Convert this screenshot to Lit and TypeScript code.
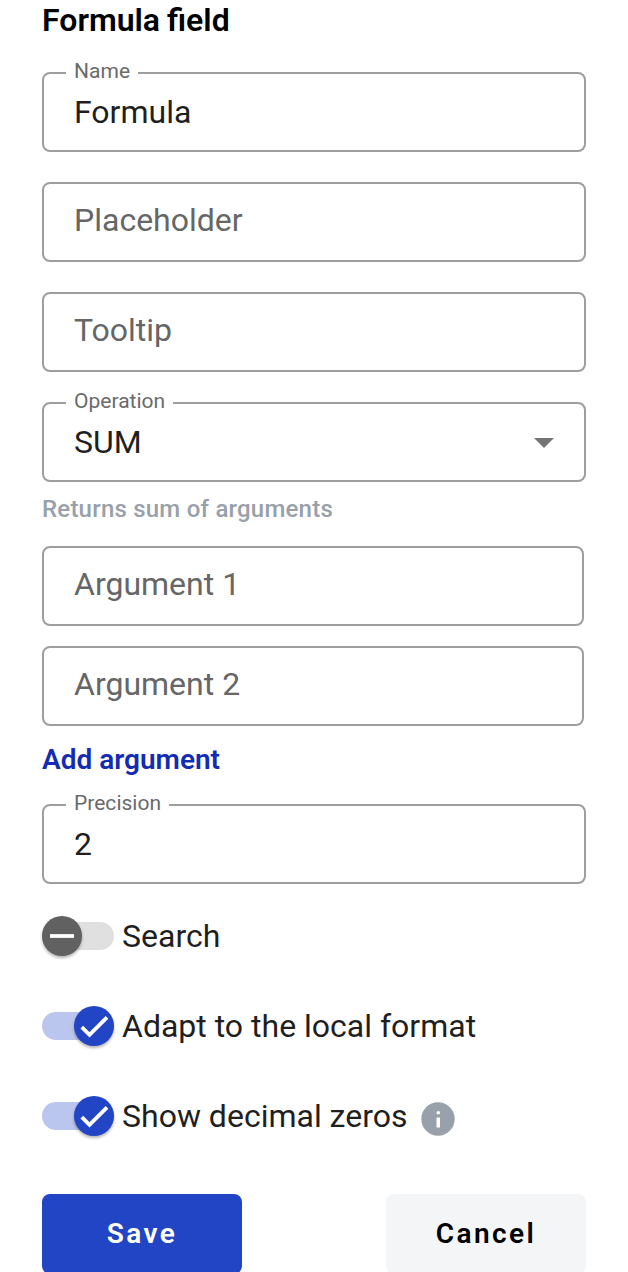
import { LitElement, html, css, nothing } from "lit";
import { customElement, property } from "lit/decorators.js";

@customElement("outlined-field")
class OutlinedField extends LitElement {
  @property() label = "";
  @property() value = "";
  @property() placeholder = "";
  @property({ type: Boolean }) select = false;
  static styles = css`
    :host { display: block; }
    fieldset { box-sizing: border-box; height: 89px; margin: -9px 0 0; padding: 0 30px; border: 2px solid #9e9e9e; border-radius: 8px; min-width: 0; }
    fieldset.plain { height: 80px; margin: 0; }
    legend { margin-left: -8px; padding: 0 8px; height: 20px; line-height: 16px; font-size: 21px; letter-spacing: 0.02px; color: #6a6a6a; }
    .row { display: flex; align-items: center; justify-content: space-between; height: 58px; font-size: 32px; color: #1f1f1f; line-height: 40px; }
    .plain .row { height: 72px; color: #666; }
    svg { display: block; margin-top: 2px; }
  `;
  render() {
    return html`<fieldset class=${this.label ? "" : "plain"}>
      ${this.label ? html`<legend>${this.label}</legend>` : nothing}
      <div class="row"><span>${this.value || this.placeholder}</span>
      ${this.select ? html`<svg width="20" height="10" viewBox="0 0 20 10"><path d="M0 0h20L10 10z" fill="#757575"/></svg>` : nothing}</div>
    </fieldset>`;
  }
}

@customElement("slide-toggle")
class SlideToggle extends LitElement {
  @property({ type: Boolean }) on = false;
  static styles = css`
    :host { display: flex; align-items: center; height: 40px; font-size: 32px; color: #1f1f1f; }
    .track { display: flex; align-items: center; width: 72px; height: 28px; border-radius: 14px; background: #e0e0e0; margin-right: 8px; }
    .track.on { background: #bac6ee; justify-content: flex-end; }
    .thumb { width: 40px; height: 40px; border-radius: 50%; background: #616161; box-shadow: 0 2px 3px rgba(0,0,0,.3); flex: none; }
    .on .thumb { background: #2145c4; }
    svg { display: block; }
  `;
  render() {
    return html`<div class="track ${this.on ? "on" : ""}"><div class="thumb"><svg width="40" height="40" viewBox="0 0 40 40" fill="none" stroke="#fff" stroke-width="3.8">
      <path d=${this.on ? "M7.8 21.2l7.7 7.6L33 11.3" : "M8 20h24"}/></svg></div></div><slot></slot>`;
  }
}

@customElement("app-root")
class AppRoot extends LitElement {
  static styles = css`
    :host { display: block; box-sizing: border-box; height: 1272px; overflow: hidden; background: #fff; padding: 0 42px; font-family: Roboto, sans-serif; }
    h1 { margin: 0; height: 72px; font-size: 32px; line-height: 40px; font-weight: 600; word-spacing: -1px; color: #000; }
    .stack { display: grid; gap: 30px; }
    .hint { height: 64px; line-height: 54px; font-size: 24px; font-weight: 500; letter-spacing: 0.22px; color: #98a0a9; }
    .args { display: grid; gap: 20px; padding-right: 2px; }
    .add { height: 78px; line-height: 67px; font-size: 28px; font-weight: 600; color: #142cb3; }
    .toggles { display: grid; gap: 50px; padding-top: 32px; }
    .info { margin: 5px 0 0 13.5px; display: block; }
    .actions { display: flex; justify-content: space-between; padding-top: 58px; }
    button { width: 200px; height: 80px; border: 0; border-radius: 8px; padding: 0 0 2px; font: 600 28px Roboto, sans-serif; letter-spacing: 2.4px; background: #f4f5f7; color: #000; }
    .save { background: #2145c4; color: #fff; }
  `;
  render() {
    return html`<h1>Formula field</h1>
      <div class="stack">
        <outlined-field label="Name" value="Formula"></outlined-field>
        <outlined-field placeholder="Placeholder"></outlined-field>
        <outlined-field placeholder="Tooltip"></outlined-field>
        <outlined-field label="Operation" value="SUM" select></outlined-field>
      </div>
      <div class="hint">Returns sum of arguments</div>
      <div class="args">
        <outlined-field placeholder="Argument 1"></outlined-field>
        <outlined-field placeholder="Argument 2"></outlined-field>
      </div>
      <div class="add">Add argument</div>
      <outlined-field label="Precision" value="2"></outlined-field>
      <div class="toggles">
        <slide-toggle>Search</slide-toggle>
        <slide-toggle on>Adapt to the local format</slide-toggle>
        <slide-toggle on>Show decimal zeros<svg class="info" width="34" height="34" viewBox="0 0 34 34"><circle cx="17" cy="17" r="16.7" fill="#98a0a9"/><path d="M15.5 15.5h3.5v10h-3.5z" fill="#fff"/><circle cx="17.3" cy="10.7" r="1.8" fill="#fff"/></svg></slide-toggle>
      </div>
      <div class="actions"><button class="save">Save</button><button>Cancel</button></div>`;
  }
}
